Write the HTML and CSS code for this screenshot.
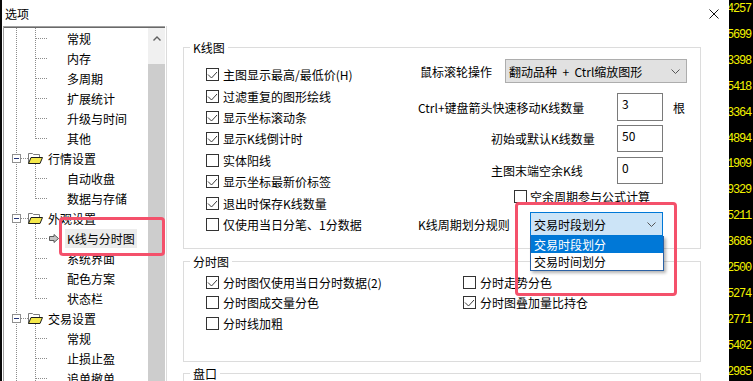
FILE: index.html
```html
<!DOCTYPE html>
<html lang="zh-CN">
<head>
	<meta charset="utf-8">
	<title>选项</title>
	<link rel="stylesheet" href="styles.css">
</head>
<body>
	<div class="screen">
		<div class="edge-left"></div>

		<div class="dialog">
			<div class="titlebar">
				<span class="title">选项</span>
				<svg class="close" width="10" height="10" viewBox="0 0 10 10"><path d="M0.5 0.5l9 9M9.5 0.5l-9 9"/></svg>
			</div>

			<div class="dlg-body">
				<!-- left navigation tree -->
				<div class="tree">
					<ul class="nodes">
						<li class="node child"><span class="label">常规</span></li>
						<li class="node child"><span class="label">内存</span></li>
						<li class="node child"><span class="label">多周期</span></li>
						<li class="node child"><span class="label">扩展统计</span></li>
						<li class="node child"><span class="label">升级与时间</span></li>
						<li class="node child last"><span class="label">其他</span></li>
						<li class="node parent">
							<svg class="toggle" width="9" height="9" viewBox="0 0 9 9"><rect x="0.5" y="0.5" width="8" height="8"/><path d="M2 4.5h5"/></svg>
							<svg class="folder" width="15" height="12" viewBox="0 0 15 12"><path class="back" d="M0.5 11.5v-10h4l1 1h6v3"/><path class="front" d="M0.5 11.5l2.5-6h11.5l-2.5 6z"/></svg>
							<span class="label">行情设置</span>
						</li>
						<li class="node child"><span class="label">自动收盘</span></li>
						<li class="node child last"><span class="label">数据与存储</span></li>
						<li class="node parent">
							<svg class="toggle" width="9" height="9" viewBox="0 0 9 9"><rect x="0.5" y="0.5" width="8" height="8"/><path d="M2 4.5h5"/></svg>
							<svg class="folder" width="15" height="12" viewBox="0 0 15 12"><path class="back" d="M0.5 11.5v-10h4l1 1h6v3"/><path class="front" d="M0.5 11.5l2.5-6h11.5l-2.5 6z"/></svg>
							<span class="label">外观设置</span>
						</li>
						<li class="node child selected">
							<svg class="pointer" width="10" height="9" viewBox="0 0 10 9"><path d="M0.5 2.5h4.5v-2l4.5 4-4.5 4v-2h-4.5z"/></svg>
							<span class="label">K线与分时图</span>
						</li>
						<li class="node child"><span class="label">系统界面</span></li>
						<li class="node child"><span class="label">配色方案</span></li>
						<li class="node child last"><span class="label">状态栏</span></li>
						<li class="node parent">
							<svg class="toggle" width="9" height="9" viewBox="0 0 9 9"><rect x="0.5" y="0.5" width="8" height="8"/><path d="M2 4.5h5"/></svg>
							<svg class="folder" width="15" height="12" viewBox="0 0 15 12"><path class="back" d="M0.5 11.5v-10h4l1 1h6v3"/><path class="front" d="M0.5 11.5l2.5-6h11.5l-2.5 6z"/></svg>
							<span class="label">交易设置</span>
						</li>
						<li class="node child"><span class="label">常规</span></li>
						<li class="node child"><span class="label">止损止盈</span></li>
						<li class="node child"><span class="label">追单撤单</span></li>
					</ul>
					<div class="vscroll">
						<div class="vscroll-up">
							<svg width="8" height="5" viewBox="0 0 8 5"><path d="M0.5 4.5l3.5-3.5 3.5 3.5"/></svg>
						</div>
						<div class="vscroll-thumb"></div>
					</div>
				</div>

				<div class="divider"></div>

				<!-- settings page -->
				<div class="pages">
					<fieldset class="group group-kline">
						<legend>K线图</legend>
						<div class="kline-body">
							<div class="checks">
								<label class="check"><span class="cb"><svg viewBox="0 0 11 11"><path d="M1 5.5l3.5 3.5 5.5-6"/></svg></span>主图显示最高/最低价(H)</label>
								<label class="check"><span class="cb"><svg viewBox="0 0 11 11"><path d="M1 5.5l3.5 3.5 5.5-6"/></svg></span>过滤重复的图形绘线</label>
								<label class="check"><span class="cb"><svg viewBox="0 0 11 11"><path d="M1 5.5l3.5 3.5 5.5-6"/></svg></span>显示坐标滚动条</label>
								<label class="check"><span class="cb"><svg viewBox="0 0 11 11"><path d="M1 5.5l3.5 3.5 5.5-6"/></svg></span>显示K线倒计时</label>
								<label class="check"><span class="cb"></span>实体阳线</label>
								<label class="check"><span class="cb"><svg viewBox="0 0 11 11"><path d="M1 5.5l3.5 3.5 5.5-6"/></svg></span>显示坐标最新价标签</label>
								<label class="check"><span class="cb"><svg viewBox="0 0 11 11"><path d="M1 5.5l3.5 3.5 5.5-6"/></svg></span>退出时保存K线数量</label>
								<label class="check"><span class="cb"></span>仅使用当日分笔、1分数据</label>
							</div>

							<div class="settings">
								<div class="set-row row-wheel">
									<span class="set-label">鼠标滚轮操作</span>
									<div class="combo combo-wheel">
										<span>翻动品种 &nbsp;+ &nbsp;Ctrl缩放图形</span>
										<svg class="chev" width="9" height="5" viewBox="0 0 9 5"><path d="M0.5 0.5l4 4 4-4"/></svg>
									</div>
								</div>
								<div class="set-row row-step">
									<span class="set-label wide">Ctrl+键盘箭头快速移动K线数量</span>
									<div class="field">3</div>
									<span class="unit">根</span>
								</div>
								<div class="set-row row-init">
									<span class="set-label wide indent">初始或默认K线数量</span>
									<div class="field">50</div>
								</div>
								<div class="set-row row-empty">
									<span class="set-label wide indent">主图末端空余K线</span>
									<div class="field">0</div>
								</div>
								<div class="set-row row-calc">
									<label class="check"><span class="cb"></span>空余周期参与公式计算</label>
								</div>
								<div class="set-row row-rule">
									<span class="set-label rule">K线周期划分规则</span>
									<div class="combo combo-rule">
										<span>交易时段划分</span>
										<svg class="chev" width="9" height="5" viewBox="0 0 9 5"><path d="M0.5 0.5l4 4 4-4"/></svg>
										<ul class="droplist">
											<li class="active">交易时段划分</li>
											<li>交易时间划分</li>
										</ul>
									</div>
								</div>
							</div>
						</div>
					</fieldset>

					<fieldset class="group group-minute">
						<legend>分时图</legend>
						<div class="minute-grid">
							<label class="check"><span class="cb"><svg viewBox="0 0 11 11"><path d="M1 5.5l3.5 3.5 5.5-6"/></svg></span>分时图仅使用当日分时数据(2)</label>
							<label class="check"><span class="cb"></span>分时走势分色</label>
							<label class="check"><span class="cb"></span>分时图成交量分色</label>
							<label class="check"><span class="cb"><svg viewBox="0 0 11 11"><path d="M1 5.5l3.5 3.5 5.5-6"/></svg></span>分时图叠加量比持仓</label>
							<label class="check"><span class="cb"></span>分时线加粗</label>
						</div>
					</fieldset>

					<fieldset class="group group-quote">
						<legend>盘口</legend>
					</fieldset>
				</div>
			</div>
		</div>

		<!-- quote window behind the dialog -->
		<div class="quotes">
			<div class="q-list">
				<div>4257</div>
				<div>5699</div>
				<div>3398</div>
				<div>5418</div>
				<div>3364</div>
				<div>4894</div>
				<div>1909</div>
				<div>9329</div>
				<div>5211</div>
				<div>3686</div>
				<div>2500</div>
				<div>5274</div>
				<div>2771</div>
				<div>5402</div>
				<div>2985</div>
			</div>
		</div>

		<!-- red annotation frames -->
		<div class="mark mark-tree"></div>
		<div class="mark mark-combo"></div>
	</div>
</body>
</html>
```

FILE: styles.css
```css
* {
	box-sizing: border-box;
}

html,
body {
	margin: 0;
	background: #000;
}

body {
	font-family: "Noto Sans CJK SC", "Microsoft YaHei", sans-serif;
	font-size: 12px;
	color: #000;
}

ul {
	list-style: none;
	margin: 0;
	padding: 0;
}

.screen {
	position: relative;
	display: flex;
	width: 753px;
	height: 381px;
	overflow: hidden;
}

.edge-left {
	flex: none;
	width: 2px;
	background: #0a0a0a;
}

.dialog {
	flex: none;
	width: 727px;
	display: flex;
	flex-direction: column;
	background: #fff;
}

.titlebar {
	flex: none;
	height: 26px;
	display: flex;
	align-items: center;
	justify-content: space-between;
	padding: 0 10px 0 3px;
}

.close {
	margin-top: 1px;
	stroke: #111;
	stroke-width: 1;
	fill: none;
}

.dlg-body {
	flex: 1;
	display: flex;
	min-height: 0;
}

/* tree */
.tree {
	flex: none;
	width: 162px;
	margin-left: 1px;
	display: flex;
	border-left: 1px solid #a0a0a0;
	border-top: 1px solid #a0a0a0;
	box-shadow: inset 0 1px 0 #696969;
}

.nodes {
	flex: 1;
	padding-top: 1px;
	overflow: hidden;
}

.node {
	--dotv: repeating-linear-gradient(to bottom, #8c8c8c 0 1px, transparent 1px 2px);
	--doth: repeating-linear-gradient(to right, #8c8c8c 0 1px, transparent 1px 2px);
	height: 20px;
	display: flex;
	align-items: center;
	white-space: nowrap;
	background-repeat: no-repeat;
}

.node.child {
	padding-left: 61px;
	background-image: var(--dotv), var(--dotv), var(--doth);
	background-size: 1px 100%, 1px 100%, 11px 1px;
	background-position: 12px 0, 31px 0, 32px 10px;
}

.node.child.last {
	background-size: 1px 100%, 1px 11px, 11px 1px;
}

.node.parent {
	padding-left: 8px;
	background-image: var(--dotv), var(--doth), var(--dotv);
	background-size: 1px 100%, 7px 1px, 1px 4px;
	background-position: 12px 0, 17px 10px, 31px 16px;
}

.node .label {
	padding: 0 2px;
	line-height: 19px;
}

.node.parent .label {
	margin-left: 3px;
}

.toggle {
	flex: none;
}

.toggle rect {
	fill: #fff;
	stroke: #8f8f8f;
}

.toggle path {
	stroke: #24367a;
	stroke-width: 1;
}

.folder {
	flex: none;
	margin-left: 7px;
}

.folder .back {
	fill: #fff;
	stroke: #7d7d7d;
}

.folder .front {
	fill: #f4e84a;
	stroke: #1b1b1b;
}

.node.selected {
	padding-left: 45px;
}

.pointer {
	flex: none;
	margin-right: 6px;
}

.pointer path {
	fill: #c4c4c4;
	stroke: #5a5a5a;
}

.node.selected .label {
	background: #ececec;
}

.vscroll {
	flex: none;
	width: 17px;
	display: flex;
	flex-direction: column;
	padding-top: 1px;
}

.vscroll-up {
	height: 36px;
	background: #f0f0f0;
	display: flex;
	justify-content: center;
	padding-top: 8px;
}

.vscroll-up svg {
	fill: none;
	stroke: #606060;
	stroke-width: 1.4;
}

.vscroll-thumb {
	flex: 1;
	background: #cdcdcd;
}

.divider {
	flex: none;
	width: 1px;
	margin-left: 1px;
	background: #dcdcdc;
}

/* settings page */
.pages {
	flex: 1;
	padding: 13px 0 0 16px;
	overflow: hidden;
}

.group {
	margin: 0;
	padding: 0;
	min-width: 0;
	width: 518px;
	border: 1px solid #dcdcdc;
}

.group legend {
	margin-left: 6px;
	padding: 0 3px;
	line-height: 17px;
}

.group-kline {
	height: 210px;
}

.group-minute {
	margin-top: 4px;
	height: 109px;
}

.group-quote {
	margin-top: 3px;
	height: 40px;
}

.kline-body {
	display: flex;
}

.checks {
	flex: none;
	width: 234px;
	padding: 8px 0 0 22px;
	display: flex;
	flex-direction: column;
}

.check {
	display: flex;
	align-items: center;
	gap: 4px;
	height: 21.43px;
	white-space: nowrap;
}

.cb {
	flex: none;
	width: 13px;
	height: 13px;
	border: 1px solid #333;
	background: #fff;
	display: flex;
}

.cb svg {
	width: 11px;
	height: 11px;
	fill: none;
	stroke: #3c3c3c;
	stroke-width: 1;
}

.settings {
	flex: 1;
}

.set-row {
	display: flex;
	align-items: center;
	white-space: nowrap;
}

.set-label {
	flex: none;
	width: 87px;
	padding-left: 2px;
}

.set-label.wide {
	width: 199px;
	padding-left: 0;
}

.set-label.indent {
	padding-left: 73px;
}

.set-label.rule {
	width: 112px;
	padding-left: 0;
}

.row-wheel {
	margin-top: 3px;
	height: 24px;
}

.row-step {
	margin-top: 10px;
	height: 28px;
}

.row-init {
	margin-top: 4px;
	height: 27px;
}

.row-empty {
	margin-top: 5px;
	height: 27px;
}

.row-calc {
	margin-top: 6px;
	height: 13px;
	padding-left: 96px;
}

.row-calc .check {
	height: 13px;
	gap: 3px;
}

.row-rule {
	margin-top: 9px;
	height: 24px;
}

.field {
	flex: none;
	width: 46px;
	height: 100%;
	border: 1px solid #7a7a7a;
	padding: 3px 0 0 4px;
	line-height: 14px;
}

.unit {
	margin-left: 10px;
}

.combo {
	position: relative;
	flex: none;
	height: 24px;
	display: flex;
	align-items: center;
	justify-content: space-between;
	padding: 0 6px 0 3px;
}

.combo-wheel {
	width: 182px;
	background: #e1e1e1;
	border: 1px solid #adadad;
}

.combo-rule {
	width: 133px;
	background: #cce4f7;
	border: 1px solid #0078d7;
}

.chev {
	fill: none;
	stroke: #555;
	stroke-width: 1;
}

.droplist {
	position: absolute;
	left: -1px;
	top: calc(100% + 1px);
	width: 134px;
	background: #fff;
	border: 1px solid #2c62a5;
	border-top: 0;
	box-shadow: 2px 2px 3px rgba(0, 0, 0, 0.3);
}

.droplist li {
	height: 17px;
	line-height: 17px;
	padding-left: 3px;
}

.droplist li.active {
	background: #0078d7;
	color: #fff;
}

.minute-grid {
	display: grid;
	grid-template-columns: 257px auto;
	grid-auto-rows: 20.5px;
	padding: 2px 0 0 22px;
}

.minute-grid .check {
	height: auto;
}

/* quote strip */
.quotes {
	flex: none;
	width: 24px;
	background: #000;
	overflow: hidden;
}

.q-list {
	margin: -3px 0 0 -2px;
	font-family: "Liberation Mono", monospace;
	font-size: 12px;
	letter-spacing: -1.2px;
	line-height: 25.9px;
	color: #f2f200;
}

/* annotation frames */
.mark {
	position: absolute;
	border: 3px solid #f4516b;
	border-radius: 4px;
	pointer-events: none;
}

.mark-tree {
	left: 59px;
	top: 217px;
	width: 106px;
	height: 39px;
}

.mark-combo {
	left: 515px;
	top: 202px;
	width: 162px;
	height: 94px;
}
```
